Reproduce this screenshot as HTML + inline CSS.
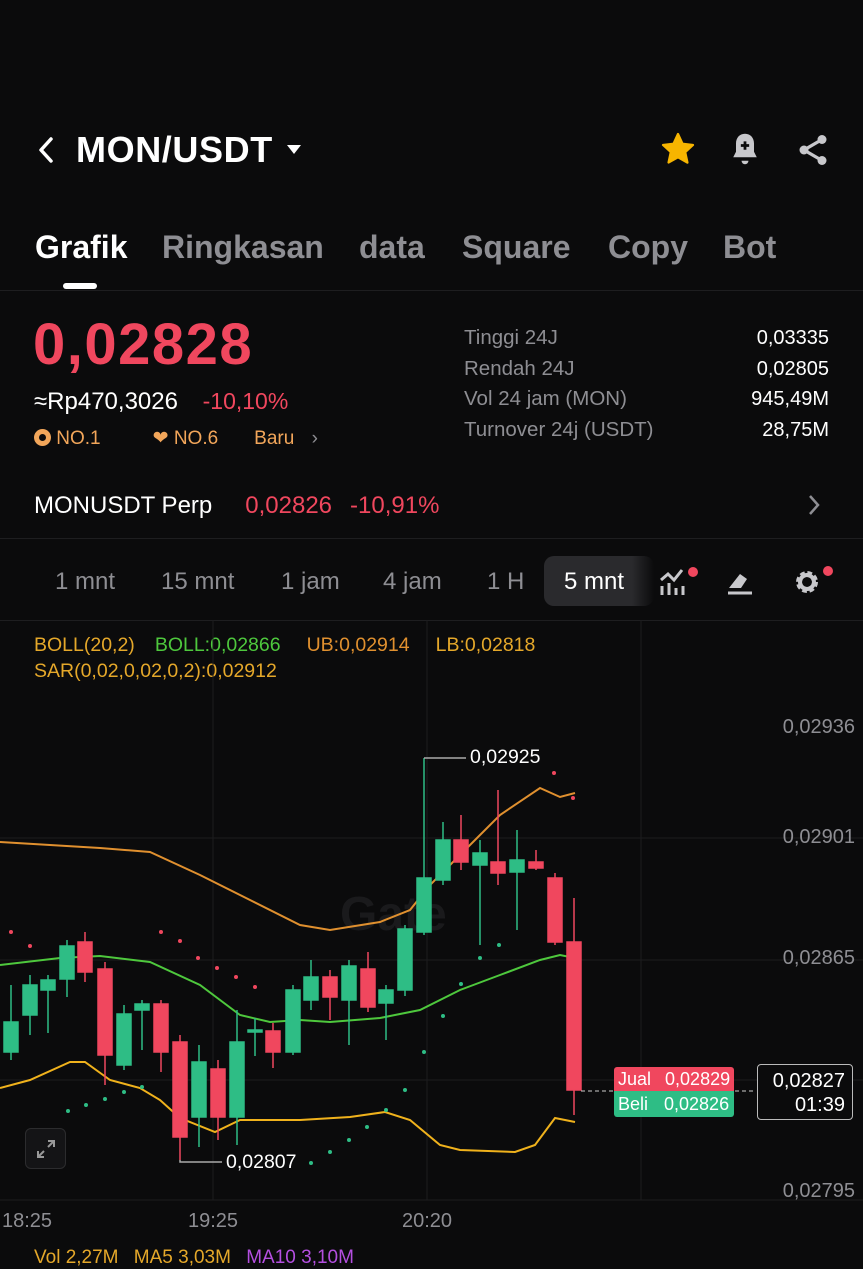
<!DOCTYPE html>
<html><head><meta charset="utf-8"><style>
*{margin:0;padding:0;box-sizing:border-box}
body{width:863px;height:1254px;background:#0b0b0c;color:#fff;font-family:"Liberation Sans",sans-serif;position:relative;overflow:hidden}
.a{position:absolute;white-space:nowrap}
.g{color:#8e8e93}
</style></head><body>
<svg class="a" style="left:36px;top:136px" width="20" height="28"><path d="M15 3 L5 14 L15 25" stroke="#fff" stroke-width="3.5" fill="none" stroke-linecap="round" stroke-linejoin="round"/></svg>
<div class="a" style="left:76px;top:129px;font-size:36px;font-weight:bold;letter-spacing:0.6px">MON/USDT</div>
<svg class="a" style="left:286px;top:144px" width="16" height="12"><path d="M1 1 L15 1 L8 10Z" fill="#fff"/></svg>
<svg class="a" style="left:659px;top:131px" width="38" height="36" viewBox="0 0 24 24"><path d="M12 2l3 6.5 7 .8-5.2 4.8 1.5 7L12 17.5 5.7 21l1.5-7L2 9.3l7-.8z" fill="#f7b500" stroke="#f7b500" stroke-width="1.5" stroke-linejoin="round"/></svg>
<svg class="a" style="left:728px;top:131px" width="34" height="36" viewBox="0 0 24 26"><path d="M12 2c-4 0-6.5 3-6.5 7v6L3.5 19h17l-2-4V9c0-4-2.5-7-6.5-7z" fill="#c8c8cc"/><path d="M9.5 21.5a2.5 2.5 0 005 0z" fill="#c8c8cc"/><path d="M12 7.5v6M9 10.5h6" stroke="#0b0b0c" stroke-width="2"/></svg>
<svg class="a" style="left:795px;top:131px" width="36" height="38" viewBox="0 0 24 24"><circle cx="18" cy="5" r="3" fill="#c8c8cc"/><circle cx="6" cy="12" r="3" fill="#c8c8cc"/><circle cx="18" cy="19" r="3" fill="#c8c8cc"/><path d="M18 5L6 12l12 7" stroke="#c8c8cc" stroke-width="2.2" fill="none"/></svg>

<div class="a" style="left:35px;top:229px;font-size:32px;font-weight:bold">Grafik</div>
<div class="a g" style="left:162px;top:229px;font-size:32px;font-weight:bold">Ringkasan</div>
<div class="a g" style="left:359px;top:229px;font-size:32px;font-weight:bold">data</div>
<div class="a g" style="left:462px;top:229px;font-size:32px;font-weight:bold">Square</div>
<div class="a g" style="left:608px;top:229px;font-size:32px;font-weight:bold">Copy</div>
<div class="a g" style="left:723px;top:229px;font-size:32px;font-weight:bold">Bot</div>
<div class="a" style="left:63px;top:283px;width:34px;height:6px;border-radius:3px;background:#fff"></div>
<div class="a" style="left:0;top:290px;width:863px;height:1px;background:#1e1e20"></div>

<div class="a" style="left:33px;top:311px;font-size:58px;font-weight:bold;color:#f0475e;letter-spacing:1.5px">0,02828</div>
<div class="a" style="left:34px;top:388px;font-size:24px">≈Rp470,3026 <span style="color:#f0475e;margin-left:18px;font-size:23px">-10,10%</span></div>
<div class="a" style="left:34px;top:427px;font-size:19px;color:#f2a65a"><span style="display:inline-block;width:17px;height:17px;border-radius:50%;background:#f2a65a;vertical-align:-2px;position:relative"><span style="position:absolute;left:5px;top:5px;width:7px;height:7px;border-radius:50%;background:#0b0b0c"></span></span> NO.1<span style="margin-left:52px">❤</span> NO.6<span style="margin-left:36px">Baru</span> <span class="g" style="margin-left:12px">›</span></div>

<div class="a g" style="left:464px;top:323px;font-size:20.5px;line-height:30.5px">Tinggi 24J<br>Rendah 24J<br>Vol 24 jam (MON)<br>Turnover 24j (USDT)</div>
<div class="a" style="right:34px;top:323px;font-size:20px;line-height:30.5px;text-align:right">0,03335<br>0,02805<br>945,49M<br>28,75M</div>

<div class="a" style="left:34px;top:492px;font-size:24px">MONUSDT Perp<span style="color:#f0475e;margin-left:33px">0,02826</span><span style="color:#f0475e;margin-left:18px">-10,91%</span></div>
<svg class="a" style="left:806px;top:493px" width="16" height="24"><path d="M4 3l8 9-8 9" stroke="#8e8e93" stroke-width="2.5" fill="none"/></svg>
<div class="a" style="left:0;top:538px;width:863px;height:1px;background:#1e1e20"></div>

<div class="a g" style="left:55px;top:568px;font-size:24px">1 mnt</div>
<div class="a g" style="left:161px;top:568px;font-size:24px">15 mnt</div>
<div class="a g" style="left:281px;top:568px;font-size:24px">1 jam</div>
<div class="a g" style="left:383px;top:568px;font-size:24px">4 jam</div>
<div class="a g" style="left:487px;top:568px;font-size:24px">1 H</div>
<div class="a" style="left:544px;top:556px;width:110px;height:50px;border-radius:10px;background:linear-gradient(90deg,#2a2a2d 80%,#0b0b0c)"></div>
<div class="a" style="left:564px;top:568px;font-size:24px">5 mnt</div>
<svg class="a" style="left:658px;top:566px" width="42" height="32"><path d="M3 14l7-6 6 6 8-10" stroke="#c8c8cc" stroke-width="3" fill="none"/><path d="M4 20v9M11 17v12M18 22v7M25 20v9" stroke="#c8c8cc" stroke-width="3"/><circle cx="35" cy="6" r="5" fill="#f0475e"/></svg>
<svg class="a" style="left:726px;top:568px" width="28" height="28"><path d="M3 20l11-14 7 5-6 9z" fill="#c8c8cc"/><path d="M2 25h24" stroke="#c8c8cc" stroke-width="3"/></svg>
<svg class="a" style="left:793px;top:564px" width="42" height="34" viewBox="0 0 42 34"><circle cx="14" cy="18" r="8" fill="none" stroke="#c8c8cc" stroke-width="6" stroke-dasharray="4 2.3"/><circle cx="14" cy="18" r="7" fill="none" stroke="#c8c8cc" stroke-width="4"/><circle cx="35" cy="7" r="5" fill="#f0475e"/></svg>
<div class="a" style="left:0;top:620px;width:863px;height:1px;background:#1e1e20"></div>

<div class="a" style="left:34px;top:634px;font-size:19.5px;color:#e5a82a">BOLL(20,2)<span style="color:#4ec83d;margin-left:20px">BOLL:0,02866</span><span style="color:#e0902f;margin-left:26px">UB:0,02914</span><span style="margin-left:26px">LB:0,02818</span></div>
<div class="a" style="left:34px;top:660px;font-size:19.5px;color:#e5a82a">SAR(0,02,0,02,0,2):0,02912</div>

<svg class="a" style="left:0;top:620px" width="863" height="634" viewBox="0 620 863 634">
<g stroke="#1c1c1e" stroke-width="1">
<path d="M213 620V1200M427 620V1200M641 620V1200M0 838H863M0 960H863M0 1080H863M0 1200H863"/>
</g>
<text x="340" y="930" font-size="48" font-weight="bold" fill="#1a1a1c" font-family="Liberation Sans">Gate</text>
<g fill="none" stroke-width="2">
<polyline stroke="#e0902f" points="0,842 100,848 150,852 200,875 250,900 300,925 330,930 380,922 410,910 430,885 460,855 500,815 540,788 560,797 575,793"/>
<polyline stroke="#4ec83d" points="0,965 60,958 100,956 150,962 200,985 240,1015 270,1022 300,1020 330,1022 380,1018 420,1010 460,990 500,975 540,960 560,955 575,958"/>
<polyline stroke="#f0b21c" points="0,1088 30,1080 70,1062 85,1062 110,1080 140,1088 160,1100 180,1118 215,1132 240,1120 300,1120 350,1117 385,1112 410,1120 440,1145 460,1150 515,1152 535,1145 555,1118 575,1122"/>
</g>
<g fill="#2ebd85" stroke="#2ebd85" stroke-width="1.5">
<path d="M11 985V1060M30 975V1035M48 975V1033M67 940V997M124 1005V1070M142 1000V1050M199 1045V1147M237 1010V1145M255 1018V1056M293 985V1055M311 960V1010M349 960V1045M386 985V1040M405 925V996M424 758V935M443 822V885M480 840V945M517 830V930"/>
<rect x="4" y="1022" width="14" height="30"/><rect x="23" y="985" width="14" height="30"/><rect x="41" y="980" width="14" height="10"/><rect x="60" y="946" width="14" height="33"/><rect x="117" y="1014" width="14" height="51"/><rect x="135" y="1004" width="14" height="6"/><rect x="192" y="1062" width="14" height="55"/><rect x="230" y="1042" width="14" height="75"/><rect x="248" y="1030" width="14" height="2"/><rect x="286" y="990" width="14" height="62"/><rect x="304" y="977" width="14" height="23"/><rect x="342" y="966" width="14" height="34"/><rect x="379" y="990" width="14" height="13"/><rect x="398" y="929" width="14" height="61"/><rect x="417" y="878" width="14" height="54"/><rect x="436" y="840" width="14" height="40"/><rect x="473" y="853" width="14" height="12"/><rect x="510" y="860" width="14" height="12"/>
</g>
<g fill="#f0475e" stroke="#f0475e" stroke-width="1.5">
<path d="M85 932V982M105 962V1085M161 1000V1072M180 1035V1160M218 1060V1140M273 1023V1068M330 970V1020M368 952V1012M461 815V870M498 790V885M536 850V870M555 873V945M574 898V1115"/>
<rect x="78" y="942" width="14" height="30"/><rect x="98" y="969" width="14" height="86"/><rect x="154" y="1004" width="14" height="48"/><rect x="173" y="1042" width="14" height="95"/><rect x="211" y="1069" width="14" height="48"/><rect x="266" y="1031" width="14" height="21"/><rect x="323" y="977" width="14" height="20"/><rect x="361" y="969" width="14" height="38"/><rect x="454" y="840" width="14" height="22"/><rect x="491" y="862" width="14" height="11"/><rect x="529" y="862" width="14" height="6"/><rect x="548" y="878" width="14" height="64"/><rect x="567" y="942" width="14" height="148"/>
</g>
<g fill="#f0475e"><circle cx="11" cy="932" r="2"/><circle cx="30" cy="946" r="2"/><circle cx="161" cy="932" r="2"/><circle cx="180" cy="941" r="2"/><circle cx="198" cy="958" r="2"/><circle cx="217" cy="968" r="2"/><circle cx="236" cy="977" r="2"/><circle cx="255" cy="987" r="2"/><circle cx="554" cy="773" r="2"/><circle cx="573" cy="798" r="2"/></g>
<g fill="#2ebd85"><circle cx="68" cy="1111" r="2"/><circle cx="86" cy="1105" r="2"/><circle cx="105" cy="1099" r="2"/><circle cx="124" cy="1092" r="2"/><circle cx="142" cy="1087" r="2"/><circle cx="311" cy="1163" r="2"/><circle cx="330" cy="1152" r="2"/><circle cx="349" cy="1140" r="2"/><circle cx="367" cy="1127" r="2"/><circle cx="386" cy="1110" r="2"/><circle cx="405" cy="1090" r="2"/><circle cx="424" cy="1052" r="2"/><circle cx="443" cy="1016" r="2"/><circle cx="461" cy="984" r="2"/><circle cx="480" cy="958" r="2"/><circle cx="499" cy="945" r="2"/></g>
<path d="M424 758H466M180 1160V1162H222" stroke="#aaa" stroke-width="1.5" fill="none"/>
<path d="M581 1091H755" stroke="#ccc" stroke-width="1" stroke-dasharray="4 3"/>
</svg>
<div class="a" style="left:470px;top:746px;font-size:19.5px">0,02925</div>
<div class="a" style="left:226px;top:1151px;font-size:19.5px">0,02807</div>
<div class="a g" style="right:8px;top:716px;font-size:20px">0,02936</div>
<div class="a g" style="right:8px;top:826px;font-size:20px">0,02901</div>
<div class="a g" style="right:8px;top:947px;font-size:20px">0,02865</div>
<div class="a g" style="right:8px;top:1180px;font-size:20px">0,02795</div>
<div class="a g" style="left:2px;top:1210px;font-size:20px">18:25</div>
<div class="a g" style="left:188px;top:1210px;font-size:20px">19:25</div>
<div class="a g" style="left:402px;top:1210px;font-size:20px">20:20</div>
<div class="a" style="left:614px;top:1067px;width:120px;height:24px;background:#f0475e;border-radius:3px 3px 0 0;font-size:18px;line-height:24px;padding-left:4px">Jual <span style="margin-left:9px">0,02829</span></div>
<div class="a" style="left:614px;top:1091px;width:120px;height:26px;background:#2ebd85;border-radius:0 0 3px 3px;font-size:18px;line-height:26px;padding-left:4px">Beli <span style="margin-left:11px">0,02826</span></div>
<div class="a" style="left:757px;top:1064px;width:96px;height:56px;border:1px solid #bbb;border-radius:4px;background:#0b0b0c;font-size:20px;text-align:right;padding:4px 7px 0 0;line-height:24px">0,02827<br>01:39</div>
<div class="a" style="left:25px;top:1128px;width:41px;height:41px;border:1px solid #2c2c2e;border-radius:6px;background:#141416"></div>
<svg class="a" style="left:34px;top:1137px" width="24" height="24"><path d="M14 4h6v6M20 4l-6 6M10 20H4v-6M4 20l6-6" stroke="#999" stroke-width="2" fill="none"/></svg>
<div class="a" style="left:34px;top:1247px;font-size:19px;color:#e5a82a">Vol 2,27M <span style="margin-left:10px">MA5 3,03M</span> <span style="color:#b44fe0;margin-left:10px">MA10 3,10M</span></div>
</body></html>
